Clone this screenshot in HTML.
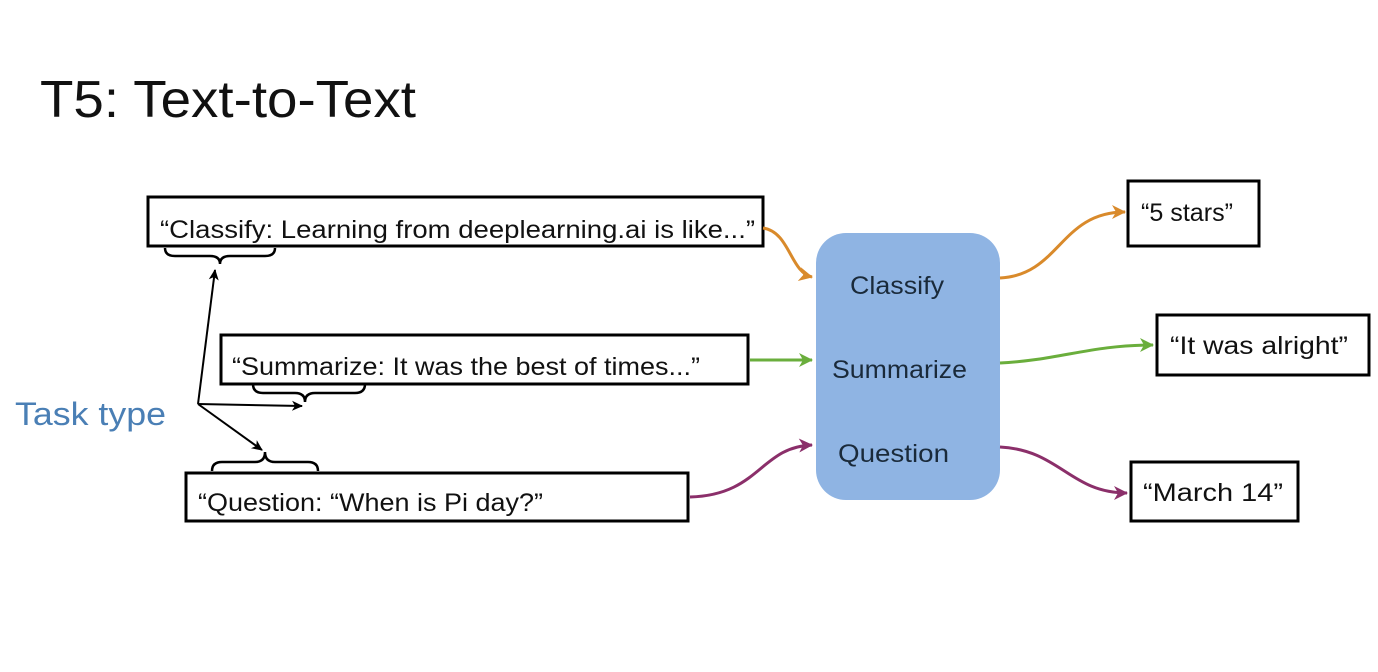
<!DOCTYPE html>
<html><head><meta charset="utf-8"><style>
body{margin:0;width:1378px;height:672px;background:#fff;overflow:hidden;font-family:"Liberation Sans",sans-serif}
</style></head><body>
<svg width="1378" height="672" viewBox="0 0 1378 672" xmlns="http://www.w3.org/2000/svg" style="position:absolute;left:0;top:0">
<defs>
<marker id="ao" markerWidth="16" markerHeight="16" refX="13" refY="8" orient="auto" markerUnits="userSpaceOnUse"><path d="M0,1 L14,8 L0,15 L4,8 Z" fill="#d98a2b"/></marker>
<marker id="ag" markerWidth="16" markerHeight="16" refX="13" refY="8" orient="auto" markerUnits="userSpaceOnUse"><path d="M0,1 L14,8 L0,15 L4,8 Z" fill="#6aae3c"/></marker>
<marker id="ap" markerWidth="16" markerHeight="16" refX="13" refY="8" orient="auto" markerUnits="userSpaceOnUse"><path d="M0,1 L14,8 L0,15 L4,8 Z" fill="#8b2f6a"/></marker>
<marker id="ak" markerWidth="12" markerHeight="12" refX="10" refY="6" orient="auto" markerUnits="userSpaceOnUse"><path d="M0,1 L11,6 L0,11 L3,6 Z" fill="#000"/></marker>
</defs>
<text x="40" y="117" font-size="52" fill="#111" textLength="376" lengthAdjust="spacingAndGlyphs">T5: Text-to-Text</text>
<text x="15" y="425" font-size="32" fill="#4a7fb5" textLength="151" lengthAdjust="spacingAndGlyphs">Task type</text>
<rect x="816" y="233" width="184" height="267" rx="30" fill="#8fb4e3"/>
<g font-size="25" fill="#1a2a3a">
<text x="850" y="294" textLength="94" lengthAdjust="spacingAndGlyphs">Classify</text>
<text x="832" y="378" textLength="135" lengthAdjust="spacingAndGlyphs">Summarize</text>
<text x="838" y="462" textLength="111" lengthAdjust="spacingAndGlyphs">Question</text>
</g>
<g fill="#fff" stroke="#000" stroke-width="3">
<rect x="148" y="197" width="615" height="49"/>
<rect x="221" y="335" width="527" height="49"/>
<rect x="186" y="473" width="502" height="48"/>
<rect x="1128" y="181" width="131" height="65"/>
<rect x="1157" y="315" width="212" height="60"/>
<rect x="1131" y="462" width="167" height="59"/>
</g>
<g font-size="25" fill="#111">
<text x="160" y="238" textLength="595" lengthAdjust="spacingAndGlyphs">“Classify: Learning from deeplearning.ai is like...”</text>
<text x="232" y="375" textLength="468" lengthAdjust="spacingAndGlyphs">“Summarize: It was the best of times...”</text>
<text x="198" y="511" textLength="345" lengthAdjust="spacingAndGlyphs">“Question: “When is Pi day?”</text>
<text x="1141" y="221" textLength="92" lengthAdjust="spacingAndGlyphs">“5 stars”</text>
<text x="1170" y="354" textLength="178" lengthAdjust="spacingAndGlyphs">“It was alright”</text>
<text x="1143" y="501" textLength="140" lengthAdjust="spacingAndGlyphs">“March 14”</text>
</g>
<g fill="none" stroke-width="3">
<path d="M763,228 C790,232 790,272 812,277" stroke="#d98a2b" marker-end="url(#ao)"/>
<path d="M1000,278 C1060,275 1060,212 1125,212" stroke="#d98a2b" marker-end="url(#ao)"/>
<path d="M750,360 L812,360" stroke="#6aae3c" marker-end="url(#ag)"/>
<path d="M1000,363 C1060,360 1090,345 1153,345" stroke="#6aae3c" marker-end="url(#ag)"/>
<path d="M690,497 C760,495 760,447 812,445" stroke="#8b2f6a" marker-end="url(#ap)"/>
<path d="M1000,447 C1060,450 1070,493 1127,493" stroke="#8b2f6a" marker-end="url(#ap)"/>
</g>
<g fill="none" stroke="#000" stroke-width="2.5">
<path d="M165,248 Q165,256 175,256 L210,256 Q220,256 220,264 Q220,256 230,256 L265,256 Q275,256 275,248"/>
<path d="M253,384 Q253,393 263,393 L295,393 Q305,393 305,402 Q305,393 315,393 L355,393 Q365,393 365,384"/>
<path d="M212,471 Q212,462 222,462 L255,462 Q265,462 265,452 Q265,462 275,462 L308,462 Q318,462 318,471"/>
</g>
<g fill="none" stroke="#000" stroke-width="2">
<path d="M198,404 L215,270" marker-end="url(#ak)"/>
<path d="M198,404 L302,406" marker-end="url(#ak)"/>
<path d="M198,404 L262,450" marker-end="url(#ak)"/>
</g>
</svg>
</body></html>
